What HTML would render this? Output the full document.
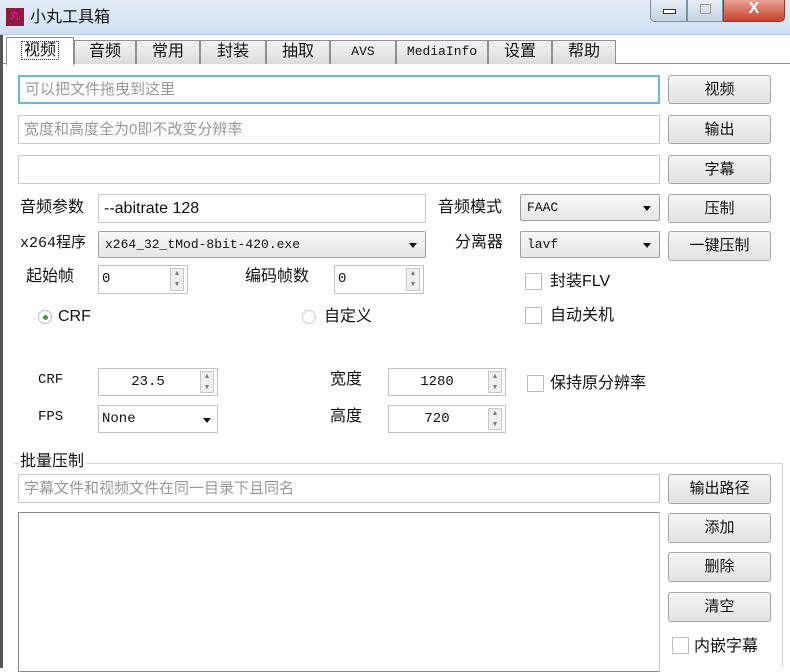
<!DOCTYPE html>
<html><head><meta charset="utf-8"><style>
*{box-sizing:border-box;margin:0;padding:0}
body{width:790px;height:668px;overflow:hidden;background:#fff;font-family:"Liberation Sans","Noto Sans CJK SC",sans-serif;font-size:15px;color:#111;position:relative}
.a{position:absolute}
.title{left:0;top:0;width:790px;height:35px;background:linear-gradient(#e4edf8,#cfdff2);border-bottom:1px solid #b7c8dc}
.tab{position:absolute;top:40px;height:24px;border:1px solid #8e8f8f;border-bottom:none;background:linear-gradient(#f4f4f4,#dcdcdc);font-size:16px;text-align:center;line-height:22px}
.mono{font-family:"Liberation Mono","Noto Sans CJK SC",monospace;font-size:13px}
.inp{position:absolute;border:1px solid #c9c9c9;background:#fff;color:#999;font-size:15px;padding-left:5px}
.btn{position:absolute;border:1px solid #a5a5a5;border-radius:3px;background:linear-gradient(#f5f5f5,#e2e2e2);text-align:center;font-size:15px}
.lbl{position:absolute;font-size:16px;line-height:18px;white-space:nowrap}
.cb{position:absolute;width:17px;height:17px;border:1px solid #bdbdbd;background:#fff}
.spin{position:absolute;border:1px solid #c2c2c2;background:#fff;font-family:"Liberation Mono",monospace;font-size:14px}
.spin i{position:absolute;right:3px;top:2px;width:14px;bottom:2px;border:1px solid #c9c9c9;background:#f0f0f0;font-style:normal;font-size:7px;color:#777;text-align:center;line-height:11px}
.combo{position:absolute;border:1px solid #a0a0a0;border-radius:2px;background:linear-gradient(#f8f8f8,#e6e6e6);font-family:"Liberation Mono",monospace;font-size:13px;padding-left:6px}
.combo b{position:absolute;right:8px;top:50%;margin-top:-2px;border-left:4px solid transparent;border-right:4px solid transparent;border-top:5px solid #111}
</style></head><body>
<div class="a" style="left:0;top:0;width:3px;height:668px;background:#555"></div>
<div class="a title"></div>
<div class="a" style="left:6px;top:8px;width:18px;height:18px;background:#8a1c3c;color:#f0c;font-size:10px;text-align:center;line-height:18px">丸</div>
<div class="a" style="left:30px;top:9px;font-size:16px;line-height:18px">小丸工具箱</div>
<div class="a" style="left:650px;top:0;width:37px;height:22px;border:1px solid #7d8ea4;border-top:none;border-radius:0 0 0 5px;background:linear-gradient(#e8eef6,#c4d2e4)"><div class="a" style="left:12px;top:9px;width:13px;height:5px;border:1px solid #333;background:#fff"></div></div>
<div class="a" style="left:687px;top:0;width:36px;height:22px;border:1px solid #7d8ea4;border-top:none;background:linear-gradient(#e8eef6,#c4d2e4)"><div class="a" style="left:12px;top:4px;width:11px;height:10px;border:1px solid #999"></div></div>
<div class="a" style="left:723px;top:0;width:62px;height:22px;border:1px solid #8a3a30;border-top:none;border-radius:0 0 5px 0;background:linear-gradient(#e9a292,#c8412e);color:#fff;font-weight:bold;text-align:center;font-size:16px;line-height:18px">X</div>
<div class="a" style="left:3px;top:63px;width:787px;height:1px;background:#8e8f8f"></div>
<div class="tab" style="left:74px;width:62px">音频</div>
<div class="tab" style="left:136px;width:64px">常用</div>
<div class="tab" style="left:200px;width:66px">封装</div>
<div class="tab" style="left:266px;width:64px">抽取</div>
<div class="tab mono" style="left:330px;width:66px;line-height:22px">AVS</div>
<div class="tab mono" style="left:396px;width:92px;line-height:22px">MediaInfo</div>
<div class="tab" style="left:488px;width:64px">设置</div>
<div class="tab" style="left:552px;width:64px">帮助</div>
<div class="tab" style="left:6px;top:37px;width:68px;height:28px;background:#fff;line-height:26px"><span style="border:1px dotted #333;padding:0 2px">视频</span></div>

<div class="inp" style="left:18px;top:75px;width:642px;height:29px;border:2px solid #6fb6d8;line-height:25px">可以把文件拖曳到这里</div>
<div class="btn" style="left:668px;top:75px;width:103px;height:29px;line-height:27px">视频</div>
<div class="inp" style="left:18px;top:115px;width:642px;height:29px;line-height:27px">宽度和高度全为0即不改变分辨率</div>
<div class="btn" style="left:668px;top:115px;width:103px;height:29px;line-height:27px">输出</div>
<div class="inp" style="left:18px;top:155px;width:642px;height:29px"></div>
<div class="btn" style="left:668px;top:155px;width:103px;height:29px;line-height:27px">字幕</div>

<div class="lbl" style="left:20px;top:199px">音频参数</div>
<div class="inp" style="left:98px;top:194px;width:328px;height:29px;color:#111;font-size:16px;line-height:27px">--abitrate 128</div>
<div class="lbl" style="left:438px;top:199px">音频模式</div>
<div class="combo" style="left:520px;top:194px;width:140px;height:27px;line-height:25px">FAAC<b></b></div>
<div class="btn" style="left:668px;top:194px;width:103px;height:29px;line-height:27px">压制</div>

<div class="lbl mono" style="left:20px;top:235px;font-size:15px">x264程序</div>
<div class="combo" style="left:98px;top:231px;width:328px;height:27px;line-height:25px">x264_32_tMod-8bit-420.exe<b></b></div>
<div class="lbl" style="left:455px;top:234px">分离器</div>
<div class="combo" style="left:520px;top:231px;width:140px;height:27px;line-height:25px">lavf<b></b></div>
<div class="btn" style="left:668px;top:231px;width:103px;height:30px;line-height:28px">一键压制</div>

<div class="lbl" style="left:26px;top:268px">起始帧</div>
<div class="spin" style="left:98px;top:265px;width:90px;height:29px;line-height:27px;padding-left:3px">0<i>▲<br>▼</i></div>
<div class="lbl" style="left:245px;top:268px">编码帧数</div>
<div class="spin" style="left:334px;top:265px;width:90px;height:29px;line-height:27px;padding-left:3px">0<i>▲<br>▼</i></div>
<div class="cb" style="left:525px;top:273px"></div><div class="lbl" style="left:550px;top:273px">封装FLV</div>

<div class="a" style="left:38px;top:310px;width:14px;height:14px;border:1px solid #bbb;border-radius:50%;background:#fff"><div class="a" style="left:4px;top:4px;width:5px;height:5px;border-radius:50%;background:#4a9a3a"></div></div>
<div class="lbl" style="left:58px;top:308px">CRF</div>
<div class="a" style="left:302px;top:310px;width:14px;height:14px;border:1px solid #ccc;border-radius:50%"></div>
<div class="lbl" style="left:324px;top:308px">自定义</div>
<div class="cb" style="left:525px;top:307px"></div><div class="lbl" style="left:550px;top:307px">自动关机</div>

<div class="lbl mono" style="left:38px;top:371px;font-size:14px">CRF</div>
<div class="spin" style="left:98px;top:368px;width:120px;height:28px;line-height:26px;text-align:center;padding-right:20px">23.5<i>▲<br>▼</i></div>
<div class="lbl" style="left:330px;top:371px">宽度</div>
<div class="spin" style="left:388px;top:368px;width:118px;height:28px;line-height:26px;text-align:center;padding-right:20px">1280<i>▲<br>▼</i></div>
<div class="cb" style="left:527px;top:375px"></div><div class="lbl" style="left:550px;top:375px">保持原分辨率</div>

<div class="lbl mono" style="left:38px;top:408px;font-size:14px">FPS</div>
<div class="spin" style="left:98px;top:405px;width:120px;height:28px;line-height:26px;padding-left:3px">None<b style="position:absolute;right:6px;top:12px;border-left:4px solid transparent;border-right:4px solid transparent;border-top:5px solid #111"></b></div>
<div class="lbl" style="left:330px;top:408px">高度</div>
<div class="spin" style="left:388px;top:405px;width:118px;height:28px;line-height:26px;text-align:center;padding-right:20px">720<i>▲<br>▼</i></div>

<div class="a" style="left:14px;top:463px;width:768px;height:1px;background:#d5d5d5"></div>
<div class="a" style="left:782px;top:463px;width:1px;height:205px;background:#d5d5d5"></div>
<div class="lbl" style="left:18px;top:453px;background:#fff;padding:0 2px">批量压制</div>
<div class="inp" style="left:18px;top:474px;width:642px;height:29px;line-height:27px">字幕文件和视频文件在同一目录下且同名</div>
<div class="btn" style="left:668px;top:474px;width:103px;height:30px;line-height:28px">输出路径</div>
<div class="a" style="left:18px;top:512px;width:642px;height:160px;border:1px solid #8a8a8a;border-right-color:#ccc;background:#fff"></div>
<div class="btn" style="left:668px;top:513px;width:103px;height:30px;line-height:28px">添加</div>
<div class="btn" style="left:668px;top:552px;width:103px;height:30px;line-height:28px">删除</div>
<div class="btn" style="left:668px;top:592px;width:103px;height:30px;line-height:28px">清空</div>
<div class="cb" style="left:672px;top:637px"></div><div class="lbl" style="left:694px;top:638px">内嵌字幕</div>
</body></html>
